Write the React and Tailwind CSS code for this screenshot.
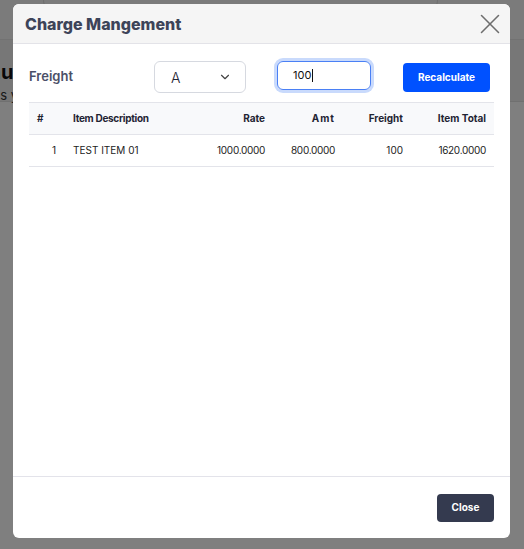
import { X, ChevronDown, Search } from "lucide-react";

const rows = [
  { no: 1, desc: "TEST ITEM 01", rate: "1000.0000", amt: "800.0000", freight: "100", total: "1620.0000" },
];

const App = () => {
  return (
    <div className="relative h-[549px] w-[524px] overflow-hidden bg-white font-['Inter',sans-serif]">
      {/* page behind the modal */}
      <div className="h-[40px] border-b border-[#e5e5e5] bg-[#f6f6f6]">
        <div className="ml-[43px] flex h-[13px] w-[395px] items-end rounded-b-[14px] border border-t-0 border-[#dcdcdc] pl-[12px]">
          <Search className="-mb-[6px] h-[14px] w-[14px] text-[#555]" />
        </div>
      </div>
      <div className="h-[62px] border-b border-[#e0e0e0] bg-[#efefef] pt-[20px]">
        <div className="-ml-[42px] text-[20px] font-bold leading-[24px] text-[#111]">Menu</div>
        <div className="-ml-[7px] mt-[2px] text-[13px] text-[#333]">as your</div>
      </div>

      {/* overlay */}
      <div className="absolute inset-0 bg-black/50" />

      {/* modal */}
      <div className="absolute left-[13px] top-[4px] flex h-[534px] w-[497px] flex-col overflow-hidden rounded-[6px] bg-white">
        <div className="flex h-[40px] shrink-0 items-center justify-between border-b border-[#e3e3e8] bg-[#f5f5f5] pl-[12px] pr-[3px]">
          <h2 className="text-[16px] font-extrabold text-[#3d4459]">Charge Mangement</h2>
          <X className="h-[34px] w-[34px] text-[#6e6e6e]" strokeWidth={1.1} />
        </div>

        <div className="flex-1 px-[16px] pt-[17px]">
          <div className="flex items-center">
            <label className="w-[125px] text-[13px] font-semibold text-[#4b5068]">Freight</label>
            <div className="flex h-[32px] w-[92px] items-center justify-between rounded-[6px] border border-[#d6d9e0] pl-[16px] pr-[13px]">
              <span className="text-[14px] font-light text-[#1f2433]">A</span>
              <ChevronDown className="h-[14px] w-[14px] text-[#444]" strokeWidth={2} />
            </div>
            <div className="-mt-[4px] ml-[31px] flex h-[29px] w-[94px] items-center rounded-[6px] border border-[#4a80f5] pl-[15px] ring-[3px] ring-[#c9dafc]">
              <span className="text-[11px] text-[#111]">100</span>
              <span className="ml-px h-[13px] w-px bg-[#111]" />
            </div>
            <button className="ml-[32px] h-[29px] w-[87px] rounded-[4px] bg-[#0051ff] text-[10px] font-bold text-white">
              Recalculate
            </button>
          </div>

          <table className="mt-[9px] w-full table-fixed border-collapse text-[10px] text-[#222]">
            <colgroup>
              <col className="w-[36px]" />
              <col className="w-[135px]" />
              <col className="w-[73px]" />
              <col className="w-[70px]" />
              <col className="w-[68px]" />
              <col className="w-[83px]" />
            </colgroup>
            <thead>
              <tr className="h-[32px] border-y border-[#e3e4ea] bg-[#f8f9fb] font-bold text-[#1f2433]">
                <th className="pl-[8px] text-left">#</th>
                <th className="pl-[8px] text-left tracking-[-0.3px]">Item Description</th>
                <th className="pr-[8px] text-right">Rate</th>
                <th className="pr-[8px] text-right tracking-[1px]">Amt</th>
                <th className="pr-[8px] text-right">Freight</th>
                <th className="pr-[8px] text-right">Item Total</th>
              </tr>
            </thead>
            <tbody>
              {rows.map((r) => (
                <tr key={r.no} className="h-[32px] border-b border-[#e3e4ea]">
                  <td className="pr-[9px] text-right">{r.no}</td>
                  <td className="pl-[8px]">{r.desc}</td>
                  <td className="pr-[8px] text-right tracking-[-0.3px]">{r.rate}</td>
                  <td className="pr-[8px] text-right tracking-[-0.3px]">{r.amt}</td>
                  <td className="pr-[8px] text-right">{r.freight}</td>
                  <td className="pr-[8px] text-right tracking-[-0.3px]">{r.total}</td>
                </tr>
              ))}
            </tbody>
          </table>
        </div>

        <div className="flex h-[62px] shrink-0 items-center justify-end border-t border-[#e3e3ea] pr-[16px]">
          <button className="h-[28px] w-[57px] rounded-[4px] bg-[#343a4f] text-[10px] font-bold text-white">
            Close
          </button>
        </div>
      </div>
    </div>
  );
};

export default App;
